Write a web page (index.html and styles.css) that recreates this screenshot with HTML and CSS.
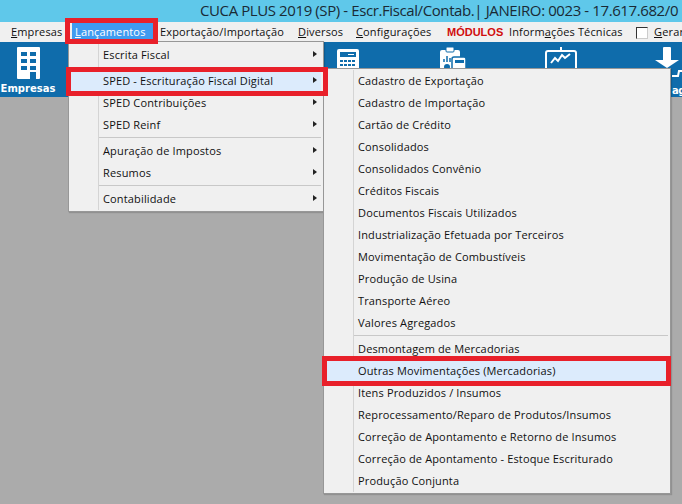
FILE: index.html
```html
<!DOCTYPE html>
<html lang="pt">
<head>
<meta charset="utf-8">
<title>CUCA PLUS 2019</title>
<link rel="stylesheet" href="styles.css">
</head>
<body>
<div class="app">
  <header class="titlebar"><span class="title">CUCA PLUS 2019 (SP) - Escr.Fiscal/Contab.| JANEIRO: 0023 - 17.617.682/0</span></header>
  <nav class="menubar">
    <span class="top t1"><u>E</u>mpresas</span>
    <span class="top t2 active"><u>L</u>ançamentos</span>
    <span class="top t3">Exportação/Importação</span>
    <span class="top t4"><u>D</u>iversos</span>
    <span class="top t5"><u>C</u>onfigurações</span>
    <span class="top t6 modulos">MÓDULOS</span>
    <span class="top t7">Inform<u>a</u>ções Técnicas</span>
    <span class="check"></span>
    <span class="top t8"><u>G</u>erar</span>
  </nav>
  <section class="toolbar">
    <div class="tool empresas">
      <svg class="ico-building" viewBox="0 0 23 32" width="23" height="32"><rect width="23" height="32" rx="1" fill="#fff"/><g fill="#0f6cab"><rect x="4" y="5" width="6" height="4"/><rect x="13" y="5" width="6" height="4"/><rect x="4" y="12" width="6" height="4"/><rect x="13" y="12" width="6" height="4"/><rect x="4" y="19" width="6" height="4"/><rect x="13" y="19" width="6" height="4"/><rect x="13" y="25" width="6" height="7"/></g></svg>
      <span class="tool-label">Empresas</span>
    </div>
    <svg class="ico ico-a" viewBox="0 0 22 20" width="22" height="20"><rect width="22" height="22" rx="2" fill="#fff"/><rect x="3" y="3" width="16" height="5" fill="#0f6cab"/><rect x="11" y="5" width="6" height="1" fill="#fff"/><g fill="#0f6cab"><rect x="3" y="11" width="3" height="2"/><rect x="7" y="11" width="3" height="2"/><rect x="11" y="11" width="3" height="2"/><rect x="15" y="11" width="3" height="2"/><rect x="3" y="15" width="3" height="2"/><rect x="7" y="15" width="3" height="2"/><rect x="11" y="15" width="3" height="2"/><rect x="15" y="15" width="3" height="2"/></g></svg>
    <svg class="ico ico-b" viewBox="0 0 27 22" width="27" height="22"><rect x="1" y="3" width="20" height="22" rx="2" fill="#fff"/><rect x="7" y="0" width="8" height="5" rx="1" fill="#fff" stroke="#0f6cab"/><rect x="13" y="10" width="14" height="14" rx="2" fill="#fff" stroke="#0f6cab" stroke-width="1.5"/><rect x="16" y="13" width="9" height="3" fill="#0f6cab"/><path d="M5 15v-3M8 15v-6M11 15v-4" stroke="#0f6cab" stroke-width="1.5"/><circle cx="8" cy="20" r="3" fill="#0f6cab"/></svg>
    <svg class="ico ico-c" viewBox="0 0 32 21" width="32" height="21"><path d="M16 0v4" stroke="#fff" stroke-width="2"/><rect x="1" y="4" width="30" height="22" rx="2" fill="none" stroke="#fff" stroke-width="2"/><path d="M6 16l4-5 3 3 4-6 3 3 5-4" fill="none" stroke="#fff" stroke-width="2"/></svg>
    <svg class="ico ico-d" viewBox="0 0 27 31" width="27" height="31"><path d="M8 1q0-1 1-1h6q1 0 1 1v12h8L12 21 0 13h8z" fill="#fff"/><path d="M17 29h6l1-5h3" fill="none" stroke="#fff" stroke-width="2"/></svg>
    <span class="tool-tail">ag</span>
  </section>
  <main class="desk"></main>

  <ul class="menu menu-main">
    <li class="item arrow">Escrita Fiscal</li>
    <li class="item arrow hot gap">SPED - Escrituração Fiscal Digital</li>
    <li class="item arrow">SPED Contribuições</li>
    <li class="item arrow">SPED Reinf</li>
    <li class="sep"></li>
    <li class="item arrow">Apuração de Impostos</li>
    <li class="item arrow">Resumos</li>
    <li class="sep"></li>
    <li class="item arrow">Contabilidade</li>
  </ul>

  <ul class="menu menu-sub">
    <li class="item">Cadastro de Exportação</li>
    <li class="item">Cadastro de Importação</li>
    <li class="item">Cartão de Crédito</li>
    <li class="item">Consolidados</li>
    <li class="item">Consolidados Convênio</li>
    <li class="item">Créditos Fiscais</li>
    <li class="item">Documentos Fiscais Utilizados</li>
    <li class="item">Industrialização Efetuada por Terceiros</li>
    <li class="item">Movimentação de Combustíveis</li>
    <li class="item">Produção de Usina</li>
    <li class="item">Transporte Aéreo</li>
    <li class="item">Valores Agregados</li>
    <li class="sep"></li>
    <li class="item">Desmontagem de Mercadorias</li>
    <li class="item hot">Outras Movimentações (Mercadorias)</li>
    <li class="item">Itens Produzidos / Insumos</li>
    <li class="item">Reprocessamento/Reparo de Produtos/Insumos</li>
    <li class="item">Correção de Apontamento e Retorno de Insumos</li>
    <li class="item">Correção de Apontamento - Estoque Escriturado</li>
    <li class="item">Produção Conjunta</li>
  </ul>

  <div class="mark mark-top"></div>
  <div class="mark mark-sped"></div>
  <div class="mark mark-outras"></div>
</div>
</body>
</html>
```
FILE: styles.css
```css
* { box-sizing: border-box; }
html, body { margin: 0; padding: 0; }
body { font-family: "Open Sans", "Noto Sans", sans-serif; font-size: 11px; color: #111; }
.app { position: relative; width: 682px; height: 504px; overflow: hidden; display: flex; flex-direction: column; background: #ababab; }
.titlebar { height: 22px; background: #5fc8ea; white-space: nowrap; overflow: hidden; padding-left: 200px; font-size: 15px; line-height: 20px; letter-spacing: -0.4px; color: #1a2a35; }
.menubar { position: relative; height: 20px; background: #f0f0f0; line-height: 20px; white-space: nowrap; }
.top { position: absolute; top: 0; letter-spacing: 0.15px; }
.t1 { left: 11px; } .t3 { left: 160px; } .t4 { left: 298px; } .t5 { left: 356px; } .t6 { left: 447px; } .t7 { left: 509px; } .t8 { left: 654px; }
.menubar .active { color: #fff; background: #3f9bf0; left: 72px; width: 81px; padding-left: 3px; top: 1px; line-height: 18px; height: 18px; }
.modulos { color: #d00d0d; font-weight: 700; letter-spacing: 0; font-family: "Liberation Sans", sans-serif; }
.check { position: absolute; left: 636px; top: 5px; width: 12px; height: 12px; background: #fff; border: 1px solid #333; border-right-color: #ccc; border-bottom-color: #ccc; }
.toolbar { position: relative; height: 55px; background: #0f6cab; }
.tool { width: 56px; display: flex; flex-direction: column; align-items: center; padding-top: 5px; }
.ico-building { margin-bottom: 4px; }
.tool-label { color: #fff; font: 700 10px/12px "DejaVu Sans", sans-serif; }
.ico { position: absolute; }
.ico-a { left: 337px; top: 7px; }
.ico-b { left: 439px; top: 5px; }
.ico-c { left: 545px; top: 5px; }
.ico-d { left: 655px; top: 5px; }
.tool-tail { position: absolute; left: 672px; top: 43px; color: #fff; letter-spacing: -0.6px; font: 700 10px/12px "DejaVu Sans", sans-serif; }
.desk { flex: 1; background: #ababab; }
.menu { position: absolute; list-style: none; margin: 0; padding: 1px 2px; background: #f0f0f0; border: 1px solid #979797; box-shadow: 1px 1px 1px rgba(0,0,0,0.15); }
.menu::before { content: ""; position: absolute; left: 29px; top: 1px; bottom: 1px; width: 1px; background: #d4d4d4; }
.menu-main { left: 68px; top: 41px; width: 256px; height: 171px; padding-top: 2px; }
.menu-sub { left: 323px; top: 68px; width: 348px; height: 426px; }
.item { position: relative; height: 22px; line-height: 21px; padding-left: 32px; letter-spacing: 0.15px; white-space: nowrap; }
.gap { margin-top: 4px; }
.hot { background: #dcebfc; }
.arrow::after { content: ""; position: absolute; right: 4px; top: 7px; border-left: 4px solid #222; border-top: 3.5px solid transparent; border-bottom: 3.5px solid transparent; }
.sep { height: 1px; margin: 1px 0 2px 27px; background: #c8c8c8; }
.mark { position: absolute; border: 5px solid #e8202a; }
.mark-top { left: 65px; top: 18px; width: 93px; height: 26px; }
.mark-sped { left: 66px; top: 67px; width: 262px; height: 29px; }
.mark-outras { left: 322px; top: 356px; width: 349px; height: 30px; }
```
